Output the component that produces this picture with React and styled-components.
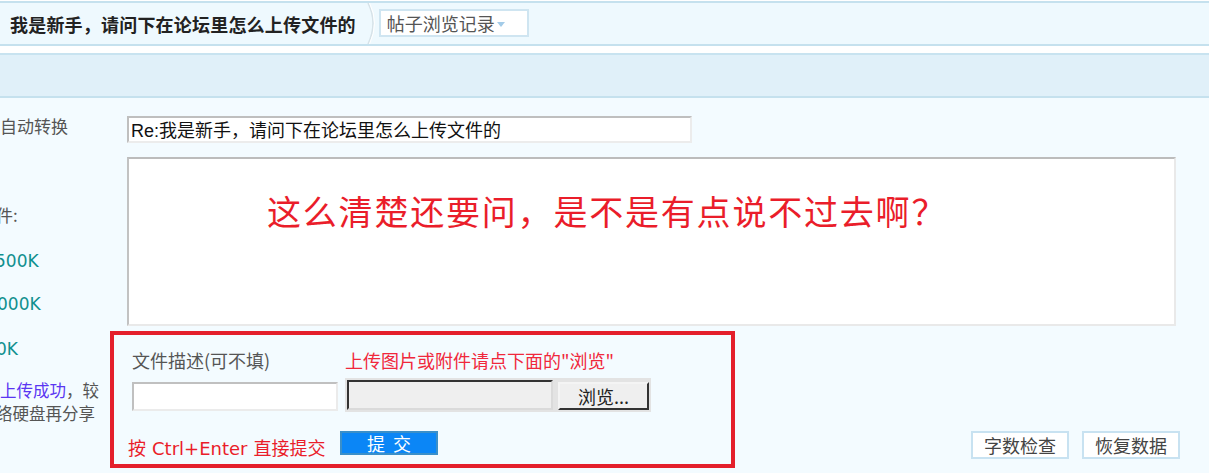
import React from 'react';
import styled, {createGlobalStyle} from 'styled-components';

const GlobalStyle = createGlobalStyle`
    html, body {
        margin: 0;
        padding: 0;
        background: #ffffff;
    }
    body {
        font-family: "Noto Sans CJK SC", "DejaVu Sans", sans-serif;
        color: #444;
    }
`

const Page = styled.div`
    width: 1209px;
    height: 473px;
    overflow: hidden;
    background: #ffffff;
`

const TopBar = styled.div`
    margin-top: 1px;
    height: 41px;
    background: #eef9fe;
    border-top: 2px solid #c5e1ee;
    border-bottom: 2px solid #c5e1ee;
    display: flex;
    align-items: center;
`

const Crumb = styled.div`
    padding-left: 10px;
    font-size: 18px;
    font-weight: 700;
    color: #222;
    letter-spacing: 0.2px;
`

const Separator = styled.svg`
    width: 14px;
    height: 41px;
    margin-left: 10px;
    flex: none;
`

const HistoryBox = styled.div`
    height: 24px;
    width: 140px;
    box-sizing: content-box;
    background: #fff;
    border: 2px solid #cfe5f1;
    display: flex;
    align-items: center;
    padding-left: 6px;
    font-size: 18px;
    color: #555;
    margin-top: -2px;
    margin-left: -1px;

    & .arrow {
        width: 0;
        height: 0;
        margin-left: 2px;
        margin-top: 3px;
        border-left: 4px solid transparent;
        border-right: 4px solid transparent;
        border-top: 5px solid #a3cbe8;
    }
`

const Gap = styled.div`
    height: 7px;
    background: #fff;
`

const SubBar = styled.div`
    height: 41px;
    background: #e0f0f9;
    border-top: 2px solid #c8e3f0;
    border-bottom: 2px solid #c5e1ee;
`

const Body = styled.div`
    background: #f3fbff;
    height: 375px;
    display: grid;
    grid-template-columns: 110px 1fr;
`

const Side = styled.div`
    overflow: hidden;
    display: flex;
    flex-direction: column;
    color: #555;
    white-space: nowrap;
`

const SideLine = styled.div`
    margin-top: ${p => p.top}px;
    margin-left: ${p => p.shift || 0}px;
    line-height: ${p => p.tight ? 23 : 22}px;
    height: ${p => p.tight ? 23 : 22}px;
    color: ${p => p.teal ? '#10908f' : '#555'};
    font-family: ${p => p.teal ? '"DejaVu Sans", sans-serif' : 'inherit'};
    font-size: ${p => p.tight ? 16.5 : 17}px;

    & .link {
        color: #5a36f2;
    }
`

const Main = styled.div`
    display: flex;
    flex-direction: column;
    padding-top: 18px;
`

const SubjectInput = styled.div`
    margin-left: 17px;
    width: 559px;
    height: 23px;
    background: #fff;
    border: 2px solid #ececec;
    border-top-color: #bfbfbf;
    border-left-color: #bfbfbf;
    font-size: 18px;
    color: #111;
    line-height: 23px;
    padding-left: 2px;
    white-space: nowrap;

    & .re {
        font-family: "Liberation Sans", sans-serif;
    }
`

const Editor = styled.div`
    margin-left: 17px;
    margin-top: 14px;
    width: 1045px;
    height: 165px;
    background: #fff;
    border: 2px solid #e9e9e9;
    border-top-color: #bcbcbc;
    border-left-color: #c2c2c2;
`

const BigRed = styled.div`
    margin-top: 32px;
    margin-left: 138px;
    font-size: 34px;
    color: #ea1d2a;
    letter-spacing: 1.8px;
    line-height: 40px;
    white-space: nowrap;
`

const Bottom = styled.div`
    margin-top: 5px;
    display: flex;
    align-items: flex-end;
`

const UploadBox = styled.div`
    width: 617px;
    height: 129px;
    border: 4px solid #e41f2b;
    display: flex;
    flex-direction: column;
`

const UploadGrid = styled.div`
    display: grid;
    grid-template-columns: 206px 306px;
    column-gap: 7px;
    padding-left: 18px;
    padding-top: 13px;
`

const Label = styled.div`
    font-size: 18px;
    line-height: 24px;
    color: ${p => p.red ? '#f0283c' : '#555'};
    white-space: nowrap;
`

const TextField = styled.div`
    margin-top: 10px;
    height: 25px;
    background: #fff;
    border: 2px solid #ebebeb;
    border-top-color: #c0c0c0;
    border-left-color: #c0c0c0;
`

const FileField = styled.div`
    margin-top: 6px;
    height: 30px;
    background: #e3e3e3;
    padding: 2px;
    display: flex;
    gap: 5px;
`

const FilePath = styled.div`
    width: 202px;
    background: #efefef;
    border: 2px solid #dadada;
    border-top-color: #333;
    border-left-color: #333;
`

const FileButton = styled.div`
    flex: 1;
    margin-top: 2px;
    background: #efefef;
    border: 2px solid #333;
    border-top-color: #f4f4f4;
    border-left-color: #f4f4f4;
    display: flex;
    align-items: center;
    justify-content: center;
    font-size: 18px;
    color: #222;
`

const SubmitRow = styled.div`
    display: flex;
    align-items: center;
    padding-left: 14px;
    margin-top: 14px;
`

const Hint = styled.div`
    font-size: 18px;
    color: #ea1d2a;
    white-space: nowrap;
    width: 212px;
    margin-top: 8px;

    & .key {
        font-family: "DejaVu Sans", sans-serif;
        font-size: 18px;
        margin: 0 2px;
    }
`

const SubmitButton = styled.div`
    width: 94px;
    height: 20px;
    background: #0b86f6;
    border: 2px solid #3a8fc9;
    color: #fff;
    font-size: 18px;
    line-height: 20px;
    text-align: center;
    letter-spacing: 8px;
    text-indent: 8px;
`

const Tools = styled.div`
    margin-left: 236px;
    margin-bottom: 9px;
    display: flex;
    gap: 13px;
`

const ToolButton = styled.div`
    width: 94px;
    height: 24px;
    background: #fff;
    border: 2px solid #c8e2f1;
    font-size: 18px;
    line-height: 24px;
    text-align: center;
    color: #444;
`

const sideLines = [
    {top: 17, text: '自动转换'},
    {top: 67, text: '件:', shift: -4},
    {top: 24, text: '500K', teal: true, shift: -5},
    {top: 21, text: '000K', teal: true, shift: -3},
    {top: 23, text: '0K', teal: true, shift: -4},
]

const App = () => {
    return (
        <Page>
            <GlobalStyle />
            <TopBar>
                <Crumb>我是新手，请问下在论坛里怎么上传文件的</Crumb>
                <Separator viewBox="0 0 14 41">
                    <path d="M2 0 Q12 20 2 41" fill="none" stroke="#d6e2e8" strokeWidth="1.5" />
                    <path d="M3.5 0 Q13.5 20 3.5 41" fill="none" stroke="#ffffff" strokeWidth="1" />
                </Separator>
                <HistoryBox>
                    帖子浏览记录<span className="arrow"></span>
                </HistoryBox>
            </TopBar>
            <Gap />
            <SubBar />
            <Body>
                <Side>
                    {sideLines.map((l, i) => (
                        <SideLine key={i} top={l.top} shift={l.shift} teal={l.teal}>{l.text}</SideLine>
                    ))}
                    <SideLine top={19} tight><span className="link">上传成功</span>，较</SideLine>
                    <SideLine top={0} shift={-4} tight>络硬盘再分享</SideLine>
                </Side>
                <Main>
                    <SubjectInput>
                        <span className="re">Re:</span>我是新手，请问下在论坛里怎么上传文件的
                    </SubjectInput>
                    <Editor>
                        <BigRed>这么清楚还要问，是不是有点说不过去啊？</BigRed>
                    </Editor>
                    <Bottom>
                        <UploadBox>
                            <UploadGrid>
                                <Label>文件描述(可不填)</Label>
                                <Label red>上传图片或附件请点下面的"浏览"</Label>
                                <TextField />
                                <FileField>
                                    <FilePath />
                                    <FileButton>浏览...</FileButton>
                                </FileField>
                            </UploadGrid>
                            <SubmitRow>
                                <Hint>按 <span className="key">Ctrl+Enter</span> 直接提交</Hint>
                                <SubmitButton>提交</SubmitButton>
                            </SubmitRow>
                        </UploadBox>
                        <Tools>
                            <ToolButton>字数检查</ToolButton>
                            <ToolButton>恢复数据</ToolButton>
                        </Tools>
                    </Bottom>
                </Main>
            </Body>
        </Page>
    )
}

export default App
